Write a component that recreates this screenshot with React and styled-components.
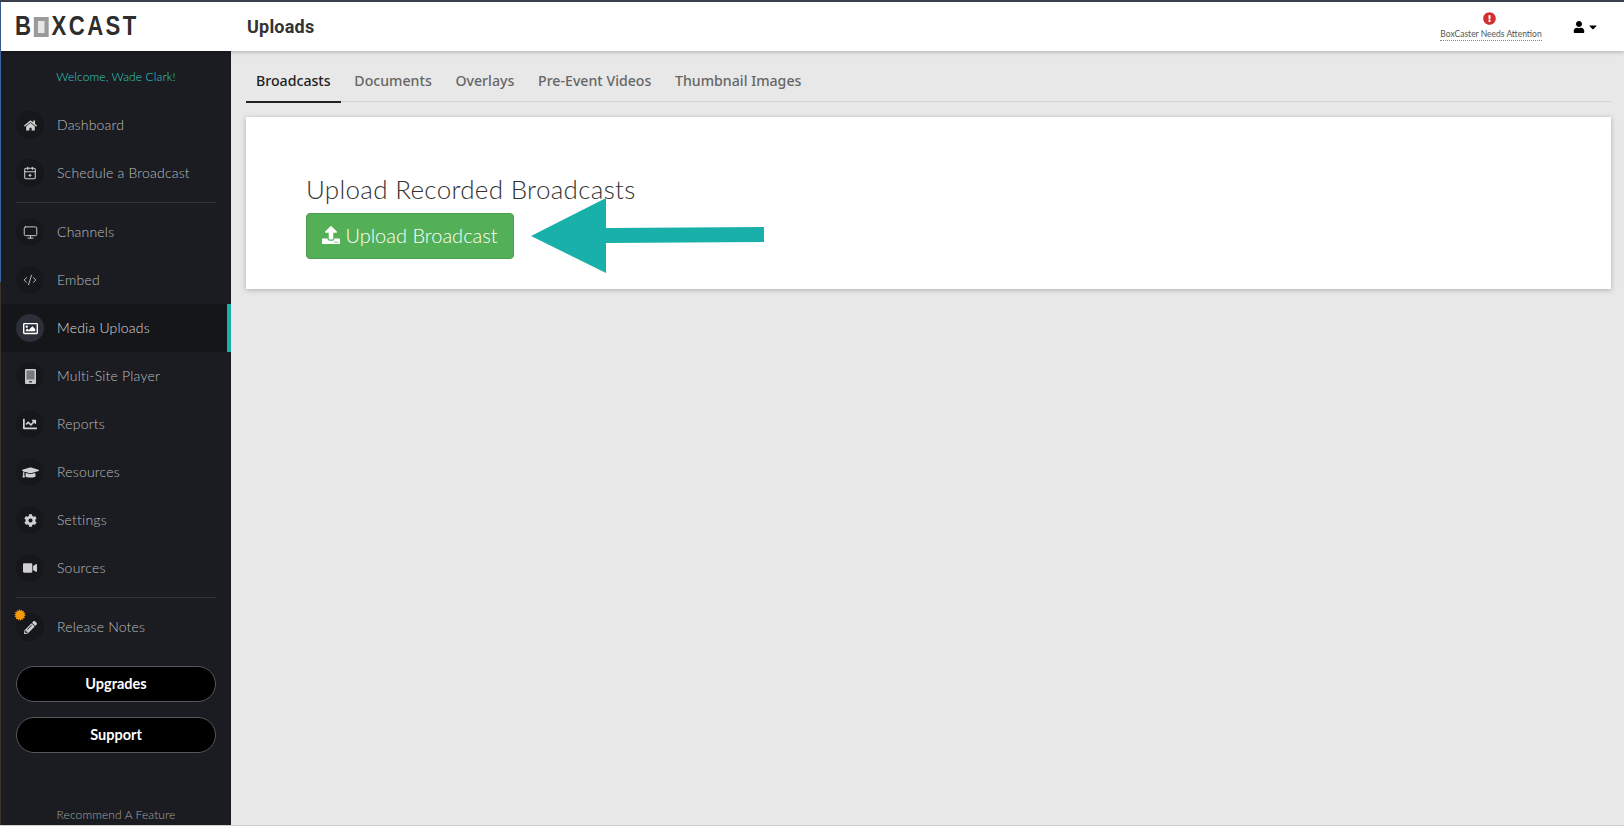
import React from "react";
import styled, { createGlobalStyle } from "styled-components";
import {
  FaHome,
  FaRegImage,
  FaChartLine,
  FaGraduationCap,
  FaCog,
  FaVideo,
  FaPencilAlt,
  FaUser,
  FaExclamationCircle,
  FaUpload,
  FaCaretDown,
} from "react-icons/fa";
import { CalendarPlus2, CodeXml, Monitor } from "lucide-react";

const GlobalStyle = createGlobalStyle`
  html, body {
    margin: 0;
    padding: 0;
    height: 100%;
    overflow: hidden;
    background: #e8e8e8;
    font-family: "Lato", "Open Sans", sans-serif;
  }
  * { box-sizing: border-box; }
`;

const Page = styled.div`
  width: 1624px;
  height: 826px;
  display: flex;
  flex-direction: column;
  padding-left: 1px;
  border-top: 2px solid #3c4250;
  border-bottom: 1px solid #cfcfcf;
  background: linear-gradient(#3f62a0 0 34%, #3a332c 34%);
`;

const Header = styled.header`
  height: 49px;
  flex-shrink: 0;
  display: flex;
  align-items: center;
  background: #fff;
  box-shadow: 0 1px 4px rgba(0, 0, 0, 0.25);
  position: relative;
  z-index: 2;
`;

const LogoWrap = styled.div`
  width: 230px;
  padding-left: 14px;
`;

const Logo = styled.div`
  display: flex;
  align-items: center;
  font-family: "Liberation Sans", sans-serif;
  font-weight: 700;
  font-size: 27px;
  letter-spacing: 3px;
  color: #2d2d2d;
  transform: scaleX(0.82);
  transform-origin: left center;
`;

const LogoBox = styled.span`
  width: 18px;
  height: 20px;
  border-style: solid;
  border-color: #9a9a9a;
  border-width: 4px 5px;
  background: #e6e6e6;
  margin-right: 4px;
`;

const HeaderTitle = styled.h1`
  margin: 0 0 0 16px;
  font-family: "Roboto", sans-serif;
  font-size: 18px;
  font-weight: 700;
  letter-spacing: 0.2px;
  color: #333;
  flex: 1;
`;

const Attention = styled.div`
  width: 100px;
  margin-right: 32px;
  display: flex;
  flex-direction: column;
  align-items: center;
`;

const AttentionIcon = styled(FaExclamationCircle)`
  margin-right: 4px;
  color: #d32f2f;
`;

const AttentionLabel = styled.span`
  margin-top: 4px;
  font-size: 8.5px;
  font-weight: 400;
  white-space: nowrap;
  color: #555;
  border-bottom: 1px dotted #888;
  line-height: 11px;
`;

const UserMenu = styled.div`
  width: 43px;
  margin-right: 8px;
  display: flex;
  align-items: center;
  gap: 2px;
  color: #000;
`;

const Body = styled.div`
  flex: 1;
  display: flex;
  min-height: 0;
  background: #e8e8e8;
`;

const Sidebar = styled.aside`
  width: 230px;
  flex-shrink: 0;
  background: #1a1c22;
  display: flex;
  flex-direction: column;
`;

const Welcome = styled.div`
  height: 50px;
  padding-top: 18px;
  text-align: center;
  font-size: 12px;
  font-weight: 300;
  letter-spacing: 0.1px;
  line-height: 16px;
  color: #35d0c0;
`;

const NavItem = styled.div`
  height: 48px;
  flex-shrink: 0;
  display: flex;
  align-items: center;
  gap: 13px;
  padding-left: 15px;
  font-size: 14px;
  font-weight: 300;
  letter-spacing: 0.2px;
  color: ${(p) => (p.$active ? "#dcdcdc" : "#bcbcbc")};
  background: ${(p) => (p.$active ? "#14161a" : "transparent")};
  border-right: ${(p) => (p.$active ? "4px solid #1ab0a5" : "none")};
`;

const NavLabel = styled.span`
  margin-top: -1px;
`;

const IconCircle = styled.span`
  position: relative;
  width: 28px;
  height: 28px;
  border-radius: 50%;
  display: flex;
  align-items: center;
  justify-content: center;
  color: ${(p) => (p.$active ? "#fff" : "#d0d0d0")};
  background: ${(p) => (p.$active ? "#2b2f38" : "#15171b")};
`;

const Burst = styled.svg`
  position: absolute;
  left: -2px;
  top: -4px;
`;

const Divider = styled.hr`
  margin: 5px 15px;
  border: 0;
  border-top: 1px solid #33353b;
  height: 0;
  flex-shrink: 0;
`;

const PillGroup = styled.div`
  display: flex;
  flex-direction: column;
  gap: 15px;
  padding: 15px 15px 0;
`;

const Pill = styled.button`
  height: 36px;
  padding-bottom: 3px;
  background: #000;
  color: #fff;
  border: 1px solid #55575c;
  border-radius: 18px;
  font-family: inherit;
  font-size: 14.5px;
  font-weight: 700;
`;

const Recommend = styled.div`
  margin-top: auto;
  padding-bottom: 2px;
  text-align: center;
  font-size: 12px;
  font-weight: 300;
  letter-spacing: 0.1px;
  line-height: 16px;
  color: #a4a4a4;
`;

const Main = styled.main`
  flex: 1;
  padding: 0 13px 0 15px;
  position: relative;
`;

const Tabs = styled.nav`
  height: 51px;
  display: flex;
  border-bottom: 1px solid #d4d4d4;
`;

const Tab = styled.div`
  padding: 20px 10px 0;
  margin-right: 3.7px;
  height: 52px;
  font-family: "Noto Sans", sans-serif;
  font-size: 14.15px;
  line-height: 19px;
  font-weight: 500;
  color: ${(p) => (p.$active ? "#222" : "#666")};
  border-bottom: ${(p) => (p.$active ? "2px solid #222" : "none")};
`;

const Card = styled.section`
  margin-top: 15px;
  height: 172px;
  padding: 58px 60px 0;
  background: #fff;
  box-shadow: 0 1px 5px rgba(0, 0, 0, 0.25);
`;

const CardTitle = styled.h2`
  margin: 0 0 9px;
  font-size: 26px;
  line-height: 29px;
  font-weight: 300;
  letter-spacing: 0.3px;
  color: #333;
`;

const UploadButton = styled.button`
  height: 46px;
  width: 208px;
  padding-bottom: 3px;
  display: flex;
  align-items: center;
  justify-content: center;
  gap: 5px;
  background: #54b056;
  border: 1px solid #4a9f4c;
  border-radius: 4px;
  color: #fff;
  font-family: inherit;
  font-size: 20px;
  font-weight: 300;
`;

const Arrow = styled.svg`
  position: absolute;
  left: 300px;
  top: 147px;
`;

const PlayerIcon = () => (
  <svg width="11" height="15" viewBox="0 0 11 15">
    <rect width="11" height="15" rx="1" fill="#c9c9c9" />
    <rect x="1.5" y="1.5" width="8" height="9" fill="#77797e" />
    <rect x="4" y="12" width="3" height="1.5" fill="#4a4c50" />
  </svg>
);

const navTop = [
  { label: "Dashboard", icon: <FaHome size={13} /> },
  { label: "Schedule a Broadcast", icon: <CalendarPlus2 size={14} strokeWidth={1.8} /> },
];

const navMiddle = [
  { label: "Channels", icon: <Monitor size={15} strokeWidth={1.5} /> },
  { label: "Embed", icon: <CodeXml size={14} strokeWidth={1.5} /> },
  { label: "Media Uploads", icon: <FaRegImage size={15} />, active: true },
  { label: "Multi-Site Player", icon: <PlayerIcon /> },
  { label: "Reports", icon: <FaChartLine size={14} /> },
  { label: "Resources", icon: <FaGraduationCap size={17} /> },
  { label: "Settings", icon: <FaCog size={13} /> },
  { label: "Sources", icon: <FaVideo size={14} /> },
];

const tabs = ["Broadcasts", "Documents", "Overlays", "Pre-Event Videos", "Thumbnail Images"];

const renderNav = (items) =>
  items.map(({ label, icon, active }) => (
    <NavItem key={label} $active={active}>
      <IconCircle $active={active}>{icon}</IconCircle>
      <NavLabel>{label}</NavLabel>
    </NavItem>
  ));

const App = () => {
  return (
    <>
      <GlobalStyle />
      <Page>
        <Header>
          <LogoWrap>
            <Logo>
              B<LogoBox />XCAST
            </Logo>
          </LogoWrap>
          <HeaderTitle>Uploads</HeaderTitle>
          <Attention>
            <AttentionIcon size={13} />
            <AttentionLabel>BoxCaster Needs Attention</AttentionLabel>
          </Attention>
          <UserMenu>
            <FaUser size={12} />
            <FaCaretDown size={12} />
          </UserMenu>
        </Header>
        <Body>
          <Sidebar>
            <Welcome>Welcome, Wade Clark!</Welcome>
            {renderNav(navTop)}
            <Divider />
            {renderNav(navMiddle)}
            <Divider />
            <NavItem>
              <IconCircle>
                <FaPencilAlt size={13} />
                <Burst width="12" height="12" viewBox="0 0 12 12">
                  <circle cx="6" cy="6" r="4.6" fill="#f59a0c" stroke="#f59a0c" strokeWidth="1.6" strokeDasharray="1 1" />
                </Burst>
              </IconCircle>
              <NavLabel>Release Notes</NavLabel>
            </NavItem>
            <PillGroup>
              <Pill>Upgrades</Pill>
              <Pill>Support</Pill>
            </PillGroup>
            <Recommend>Recommend A Feature</Recommend>
          </Sidebar>
          <Main>
            <Tabs>
              {tabs.map((tab, i) => (
                <Tab key={tab} $active={i === 0}>
                  {tab}
                </Tab>
              ))}
            </Tabs>
            <Card>
              <CardTitle>Upload Recorded Broadcasts</CardTitle>
              <UploadButton>
                <FaUpload size={18} />
                Upload Broadcast
              </UploadButton>
            </Card>
            <Arrow width="240" height="80" viewBox="0 0 240 80">
              <polygon points="0,38 75,0 75,30 233,29 233,44 75,45 75,75" fill="#18b0a8" />
            </Arrow>
          </Main>
        </Body>
      </Page>
    </>
  );
};

export default App;
